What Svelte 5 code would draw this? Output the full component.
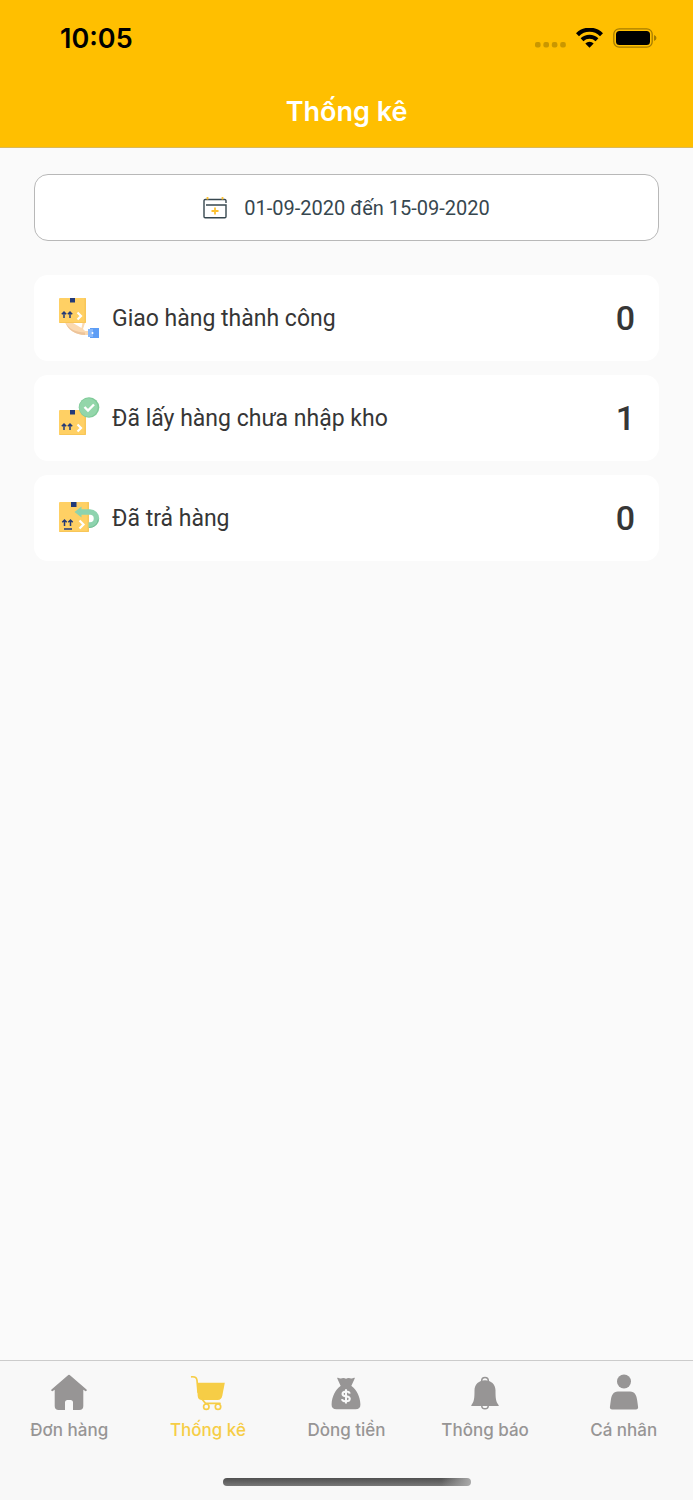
<script lang="ts">
	type Stat = { icon: 'delivered' | 'picked' | 'returned'; label: string; value: number };
	type Tab = { icon: 'home' | 'cart' | 'money' | 'bell' | 'user'; label: string };

	const stats: Stat[] = [
		{ icon: 'delivered', label: 'Giao hàng thành công', value: 0 },
		{ icon: 'picked', label: 'Đã lấy hàng chưa nhập kho', value: 1 },
		{ icon: 'returned', label: 'Đã trả hàng', value: 0 }
	];

	const tabs: Tab[] = [
		{ icon: 'home', label: 'Đơn hàng' },
		{ icon: 'cart', label: 'Thống kê' },
		{ icon: 'money', label: 'Dòng tiền' },
		{ icon: 'bell', label: 'Thông báo' },
		{ icon: 'user', label: 'Cá nhân' }
	];

	let active = $state('cart');
</script>

{#snippet box(x: number, y: number, w: number, h: number)}
	<g transform="translate({x} {y})">
		<rect width={w} height={h} rx="1" fill="#ffd064" />
		<path d="M{w - 1.5} 0h.5a1 1 0 0 1 1 1v{h - 2}a1 1 0 0 1-1 1H1l-1-1h{w - 1.5}z" fill="#f8c658" />
	</g>
{/snippet}

{#snippet arrows(x: number, y: number)}
	<path
		transform="translate({x} {y})"
		d="M2.5 7V1M.3 3.2 2.5 1l2.2 2.2M8.500 7V1M6.300 3.200 8.500 1l2.200 2.200"
		fill="none"
		stroke="#233a78"
		stroke-width="1.500"
	/>
{/snippet}

<div class="screen">
	<header>
		<div class="status">
			<time>10:05</time>
			<div class="indicators">
				<svg width="31" height="20" viewBox="0 0 31 20" fill="#c99700">
					<rect x="0" y="14" width="5.600" height="5.600" rx="2" />
					<rect x="8.400" y="14" width="5.600" height="5.600" rx="2" />
					<rect x="16.800" y="14" width="5.600" height="5.600" rx="2" />
					<rect x="25.200" y="14" width="5.600" height="5.600" rx="2" />
				</svg>
				<svg width="27" height="20" viewBox="0 0 27 20">
					<path d="M1.500 6.700a17 17 0 0 1 24 0" fill="none" stroke="#000" stroke-width="4.200" />
					<path d="M6 11.700a10.700 10.700 0 0 1 15 0" fill="none" stroke="#000" stroke-width="4" />
					<path d="M9.300 15.400a6 6 0 0 1 8.400 0l-4.200 4.300z" />
				</svg>
				<svg width="44" height="20" viewBox="0 0 44 20">
					<rect x=".8" y=".8" width="38.400" height="18.400" rx="5.500" fill="none" stroke="#a67c00" stroke-width="1.300" />
					<rect x="3" y="3" width="34" height="14" rx="3.500" />
					<path d="M41 7q2.500.8 2.500 3T41 13z" fill="#a67c00" />
				</svg>
			</div>
		</div>
		<h1>Thống kê</h1>
	</header>

	<main>
		<button class="range" type="button">
			<svg width="24" height="22" viewBox="0 0 24 22" fill="none">
				<path d="M23 6V3.500A1.200 1.200 0 0 0 21.800 2.500H2.200A1.200 1.200 0 0 0 1 3.500v16a1.200 1.200 0 0 0 1.200 1.200h19.600a1.200 1.200 0 0 0 1.200-1.200V8H3" stroke="#37474f" stroke-width="1.400" />
				<path d="M4.500 0v2.500M19.500 0v2.500" stroke="#fdc02f" stroke-width="1.800" />
				<path d="M12 10.500v7M8.500 14h7" stroke="#fdc02f" stroke-width="1.800" />
			</svg>
			<span>01-09-2020 đến 15-09-2020</span>
		</button>

		<ul>
			{#each stats as stat}
				<li>
					<svg width="42" height="42" viewBox="0 0 42 42">
						{#if stat.icon === 'delivered'}
							<path d="M7 25c3 8 11 13 20 13h4v-4h-4l-2-2 2-6z" fill="#fbd9b0" />
							<path d="M7 25c4 7 11 10.500 20 10.500V38C18 38 10 33 7 25z" fill="#edc49a" />
							<path d="M15 26l8.500 5 1-5z" fill="#fff" />
							{@render box(1, 1, 27, 25)}
							<path d="M12 1h5v4.500h-5z" fill="#233a78" />
							{@render arrows(3.5, 14)}
							<path d="m19.500 15.500 3.500 3.500-3.500 3.500" fill="none" stroke="#fff" stroke-width="2.200" />
							<rect x="32" y="31" width="9" height="10" fill="#5d9df5" />
							<path d="M30 32h5v8h-5z" fill="#84b6fa" />
							<circle cx="34.500" cy="36" r="1" fill="#fff" />
						{:else if stat.icon === 'picked'}
							{@render box(1, 13, 27, 25)}
							<path d="M12 13h5v4.500h-5z" fill="#233a78" />
							{@render arrows(3.5, 26)}
							<path d="m19.500 27.500 3.500 3.500-3.500 3.500" fill="none" stroke="#fff" stroke-width="2.200" />
							<circle cx="31" cy="10.500" r="10.300" fill="#7fca98" />
							<circle cx="30.500" cy="10.500" r="9.200" fill="#93d6aa" />
							<path d="m26.500 10 3.500 3.500 6-6" fill="none" stroke="#fff" stroke-width="2.400" />
						{:else}
							{@render box(1, 5, 30, 30)}
							<path d="M13 5h5.500v5H13z" fill="#233a78" />
							{@render arrows(4, 22)}
							<path d="M6 32h8" stroke="#233a78" stroke-width="1.500" />
							<path d="m21.500 23.500 4 4-4 4" fill="none" stroke="#fff" stroke-width="2.200" />
							<path d="M23 15h9a6.500 6.500 0 0 1 0 13h-1.500" fill="none" stroke="#8dd3ae" stroke-width="5.500" />
							<path d="M40.300 22.500A9 9 0 0 1 31 30.500" fill="none" stroke="#72bd92" stroke-width="1" />
							<path d="M16.500 15l7-5.500v11z" fill="#8dd3ae" />
						{/if}
					</svg>
					<span class="label">{stat.label}</span>
					<strong>{stat.value}</strong>
				</li>
			{/each}
		</ul>
	</main>

	<nav>
		<div class="tabs">
			{#each tabs as tab}
				<button
					type="button"
					class:active={active === tab.icon}
					aria-current={active === tab.icon ? 'page' : undefined}
					onclick={() => (active = tab.icon)}
				>
					<svg width="38" height="38" viewBox="0 0 38 38" fill="currentColor">
						{#if tab.icon === 'home'}
							<path d="M18.300 1.900a1.200 1.200 0 0 1 1.400 0L36.500 16.500a.9.9 0 0 1-1.200 1.400l-2-1.200V33a4 4 0 0 1-4 4H23V29.500a2.500 2.500 0 0 0-2.500-2.500h-3a2.500 2.500 0 0 0-2.500 2.500V37H8.700a4 4 0 0 1-4-4V16.700l-2 1.200a.9.9 0 0 1-1.200-1.400z" />
						{:else if tab.icon === 'cart'}
							<path d="M8 9.800h27.800l-2.500 13c-.5 2.500-2 4.200-4.500 4.200H13c-3 0-4-1.500-4.300-4z" />
							<g fill="none" stroke="currentColor" stroke-width="1.700" stroke-linecap="round">
								<path d="M2.700 3.800c3-.3 5 .5 5.300 3.500l1 12M12.500 25.500l4 4.800H31" />
								<circle cx="17.300" cy="33.700" r="2.700" />
								<circle cx="29" cy="33.700" r="2.700" />
							</g>
						{:else if tab.icon === 'money'}
							<path d="M11 4.800q2 1.200 3.800.5 2.200-1 4.200.5 2-1.500 4.200-.5 1.800.7 3.800-.5a.5.5 0 0 1 .7.7L24.300 13H13.700L10.300 5.500a.5.5 0 0 1 .7-.7z" />
							<path d="M13.500 12.900h11c5 3.500 8.500 10.300 8.900 18.300.2 3.300-1.600 5-4.900 5h-19c-3.300 0-5.100-1.700-4.900-5 .4-8 3.900-14.800 8.900-18.300z" />
							<path d="M22.700 20.700q-.3-2.200-3.700-2.200-3.500 0-3.500 2.500 0 2 3.500 2.300t3.800 2.400q0 2.600-3.800 2.600t-4-2.200M19 16.200v14.300" fill="none" stroke="#f8f8f8" stroke-width="2" />
						{:else if tab.icon === 'bell'}
							<circle cx="19" cy="7.800" r="3.300" fill="none" stroke="currentColor" stroke-width="1.500" />
							<circle cx="19" cy="32.500" r="3.300" fill="none" stroke="currentColor" stroke-width="1.500" />
							<path d="M19 7.300c6 0 10.500 4.200 10.500 10 0 8 .3 11.200 3.200 14.900V33H5.300v-.8C8.200 28.500 8.500 25.300 8.500 17.300c0-5.800 4.500-10 10.500-10z" />
						{:else}
							<circle cx="19" cy="8.500" r="7" />
							<path d="M13 18.500h12c5 0 6.600 4.300 7.200 9l.9 6.500c.2 1.500-.7 2.500-2.200 2.500H7.100c-1.500 0-2.400-1-2.200-2.500l.9-6.500c.6-4.700 2.200-9 7.200-9z" />
						{/if}
					</svg>
					<span>{tab.label}</span>
				</button>
			{/each}
		</div>
		<div class="home-bar"></div>
	</nav>
</div>

<style>
	:global(body) {
		margin: 0;
		background: #fafafa;
	}

	.screen {
		display: flex;
		flex-direction: column;
		min-height: 100vh;
		font-family: Roboto, 'Noto Sans', sans-serif;
		color: #363636;
	}

	header {
		background: #ffbf00;
		border-bottom: 1px solid #d9b85a;
		font-family: Inter, 'Noto Sans', sans-serif;
	}

	.status {
		display: flex;
		align-items: center;
		justify-content: space-between;
		height: 76px;
		padding: 0 36px 0 60px;
		color: #000;
	}

	time {
		font-size: 27px;
		font-weight: 600;
	}

	.indicators {
		display: flex;
		align-items: center;
		gap: 10px;
	}

	h1 {
		margin: 0;
		padding: 17px 0;
		font-size: 27px;
		font-weight: 600;
		line-height: 37px;
		text-align: center;
		color: #fff;
	}

	main {
		flex: 1;
		padding: 26px 34px;
	}

	button {
		font: inherit;
		cursor: pointer;
	}

	.range {
		display: flex;
		align-items: center;
		justify-content: center;
		gap: 17px;
		width: 100%;
		height: 67px;
		padding: 0;
		border: 1px solid #b8b8b8;
		border-radius: 14px;
		background: #fff;
		font-size: 20px;
		color: #37474f;
	}

	ul {
		display: flex;
		flex-direction: column;
		gap: 14px;
		margin: 34px 0 0;
		padding: 0;
		list-style: none;
	}

	li {
		display: flex;
		align-items: center;
		gap: 12px;
		height: 86px;
		padding: 0 24px;
		border-radius: 14px;
		background: #fff;
	}

	.label {
		flex: 1;
		font-size: 23px;
	}

	strong {
		font-size: 34px;
		font-weight: 500;
	}

	nav {
		border-top: 1px solid #ccc;
		background: #f8f8f8;
		font-family: Inter, 'Noto Sans', sans-serif;
	}

	.tabs {
		display: grid;
		grid-template-columns: repeat(5, 1fr);
	}

	.tabs button {
		display: flex;
		flex-direction: column;
		align-items: center;
		gap: 7px;
		padding: 12px 0 0;
		border: 0;
		background: none;
		color: #979595;
		font-size: 17px;
		font-weight: 500;
		line-height: 24px;
	}

	.tabs button.active {
		color: #f6cd46;
	}

	.home-bar {
		width: 248px;
		height: 8px;
		margin: 36px auto 14px;
		border-radius: 4px;
		background: linear-gradient(90deg, transparent 88%, #aaa), linear-gradient(#505050, #777);
	}
</style>
